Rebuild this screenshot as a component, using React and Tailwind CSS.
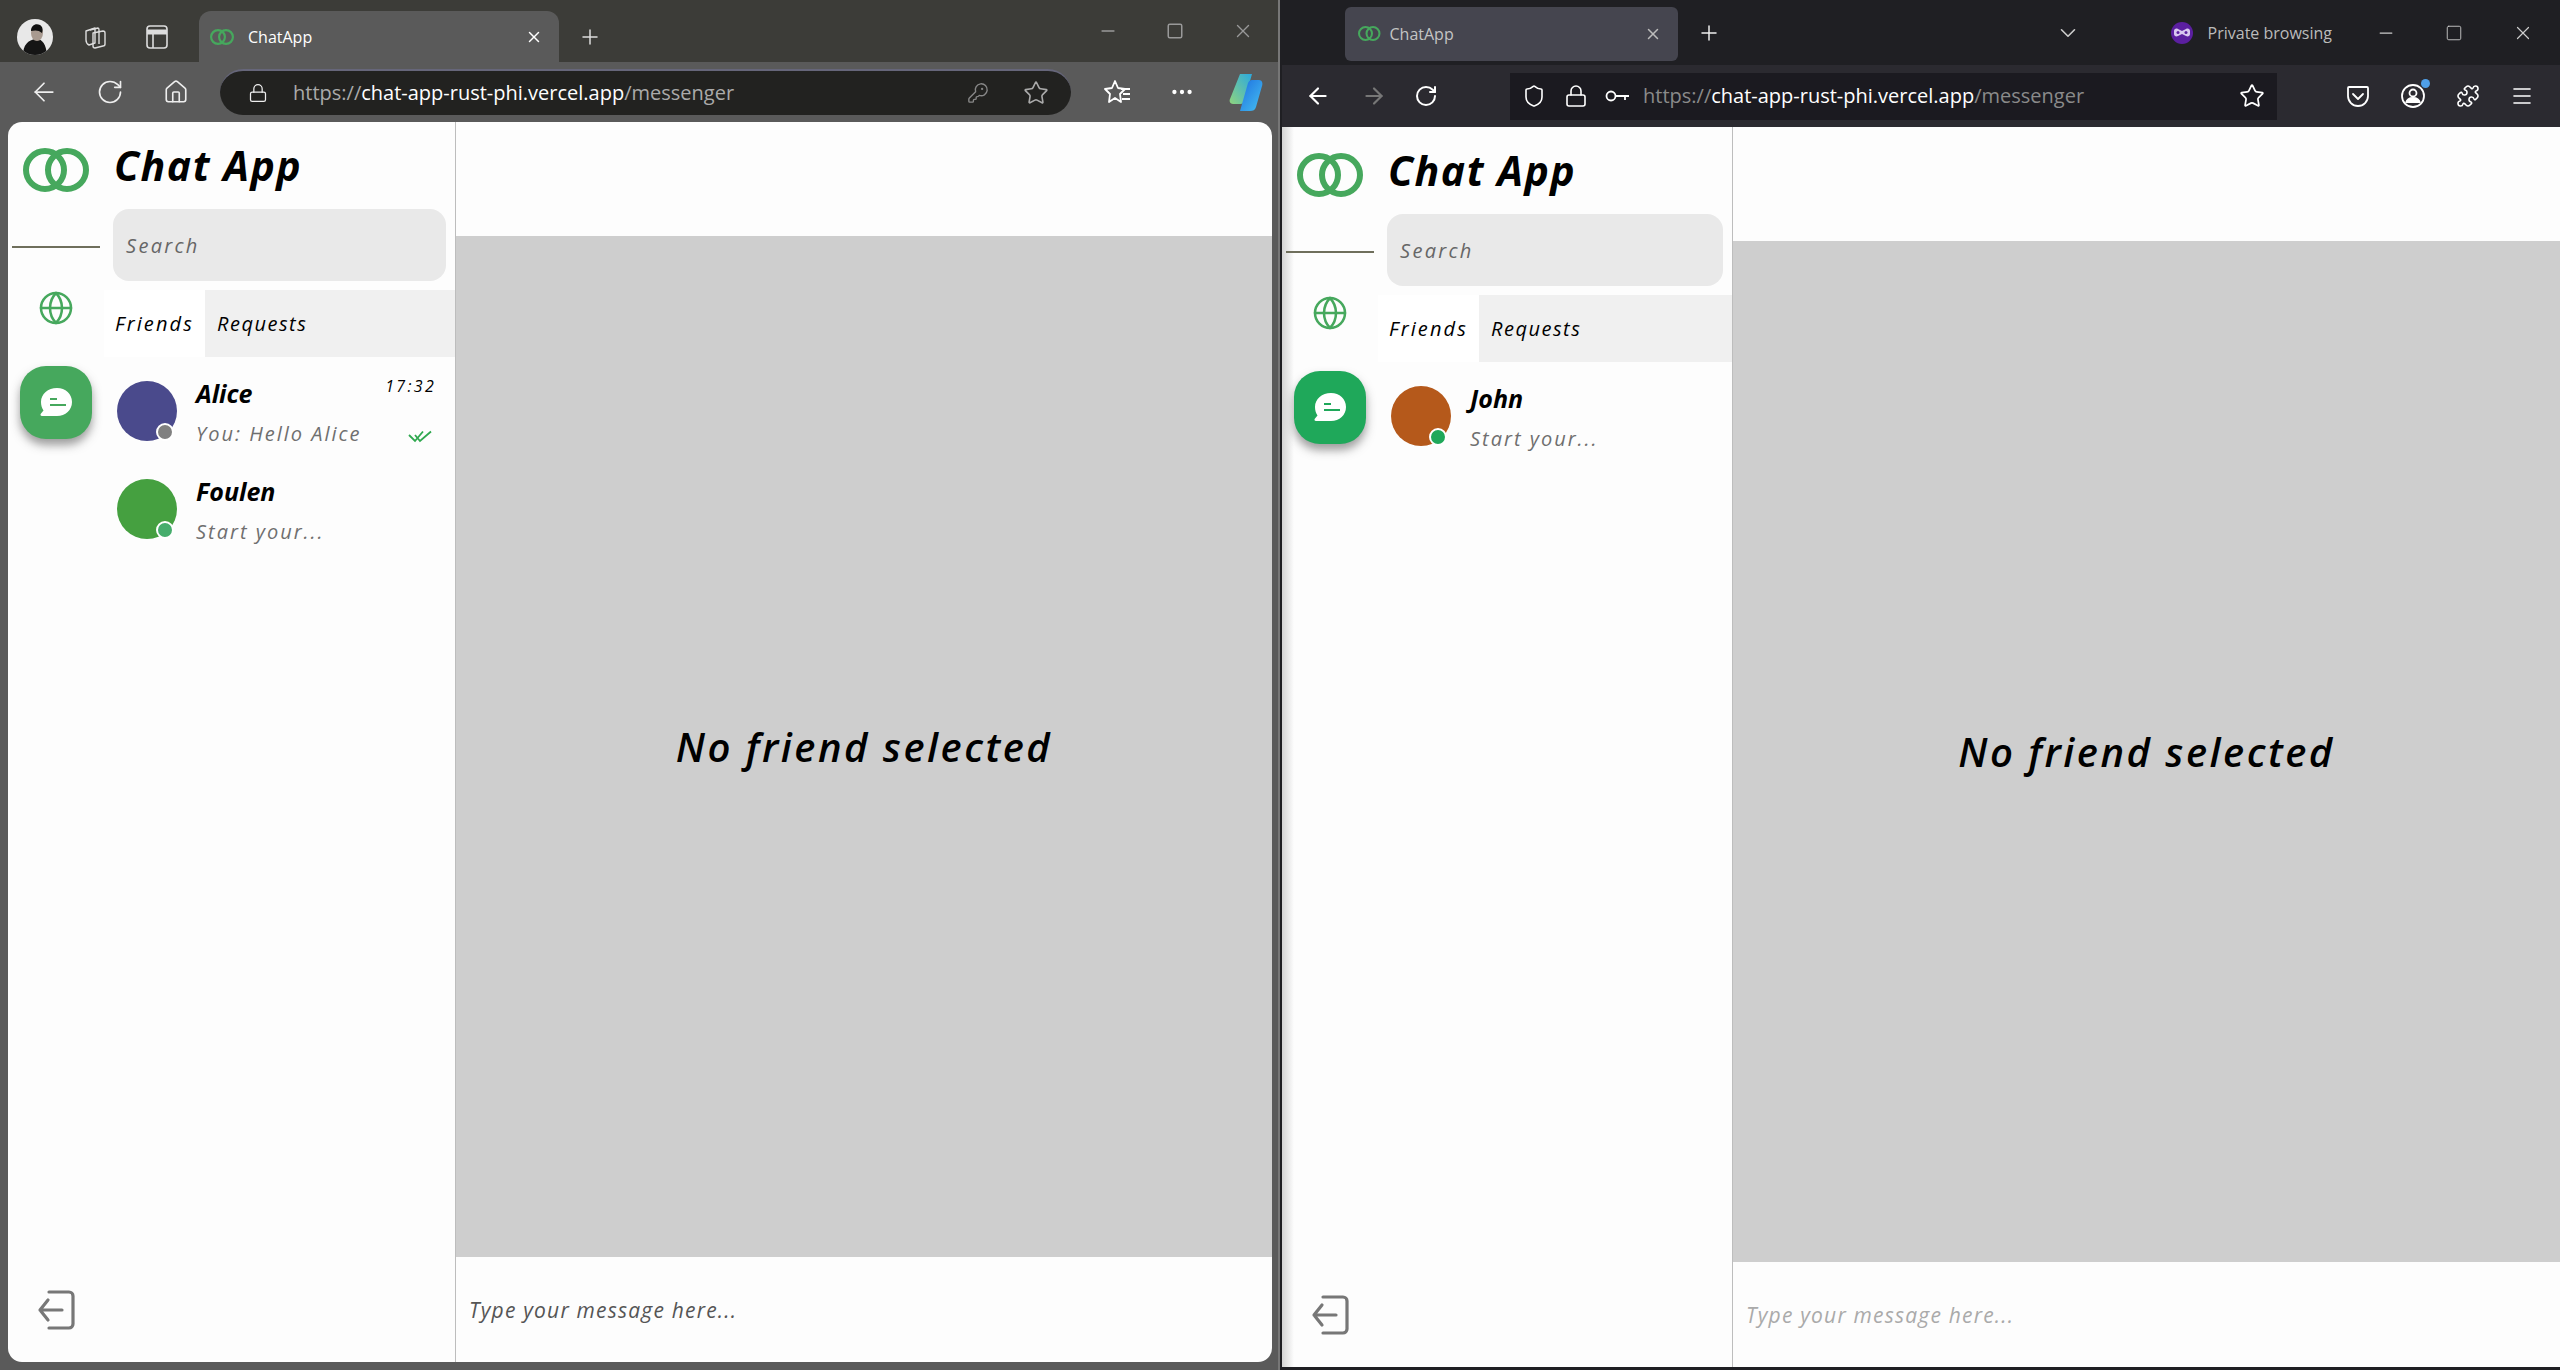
import React from "react";
import { ArrowLeft, ArrowRight, RotateCw, Home, Lock, KeyRound, Star, Plus, X, Minus, Square, Globe, Shield, Ellipsis, Puzzle, Menu, ChevronDown } from "lucide-react";

const hand = "font-['Open_Sans',sans-serif] italic";

function Rings({ size = 20 }) {
  return (
    <svg width={size * 1.5} height={size} viewBox="0 0 66 44" fill="none" stroke="#46a85d" strokeWidth="6">
      <circle cx="22" cy="22" r="19" />
      <circle cx="44" cy="22" r="19" />
    </svg>
  );
}

function Bubble({ color }) {
  return (
    <svg width="34" height="34" viewBox="0 0 34 34">
      <path d="M18 2c8.500 0 15 6 15 14s-6.500 14-15 14H3c-1.500 0-2-1.500-1-2.500l2.500-3C2.800 22 2 19 2 16 2 8 9 2 18 2z" fill="#fff" />
      <rect x="11" y="12" width="7" height="2" fill={color} />
      <rect x="11" y="18" width="16" height="2" fill={color} />
    </svg>
  );
}

function Logout() {
  return (
    <svg width="38" height="40" viewBox="0 0 38 40" fill="none" stroke="#777" strokeWidth="3.200" strokeLinecap="round" strokeLinejoin="round">
      <path d="M12 2h20a4 4 0 0 1 4 4v28a4 4 0 0 1-4 4H12" />
      <path d="M25 20H3M11 10L3 20l8 10" />
    </svg>
  );
}

function DoubleCheck() {
  return (
    <svg width="24" height="13" viewBox="0 0 24 13" fill="none" stroke="#2fa84f" strokeWidth="1.800">
      <path d="M1 5l6 6 8-9.500M7 5l5 6L23 1.500" />
    </svg>
  );
}

function Row({ color, dot, dotRight, name, sub, time, check }) {
  return (
    <div className="h-[98px] flex items-center pl-[13px] pr-[19px]">
      <div className="relative w-[60px] h-[60px] rounded-full shrink-0" style={{ backgroundColor: color }}>
        <div className={`absolute bottom-0 w-[18px] h-[18px] rounded-full border-2 border-white ${dotRight}`} style={{ backgroundColor: dot }} />
      </div>
      <div className="ml-[19px] flex-1 min-w-0 mt-[4px]">
        <div className="flex items-start justify-between h-[42px]">
          <span className={`${hand} font-bold text-[25px] leading-[36px] text-black`}>{name}</span>
          {time && <span className={`${hand} text-[16px] leading-[22px] tracking-[2.300px] text-black`}>{time}</span>}
        </div>
        <div className="flex items-center justify-between h-[34px]">
          <span className={`${hand} text-[20px] tracking-[2px] leading-[30px] text-[#6f6f6f]`}>{sub}</span>
          {check && <div className="mr-[4px] mt-[4px]"><DoubleCheck /></div>}
        </div>
      </div>
    </div>
  );
}

function Messenger({ rows, railClass, widthClass, btn, placeholderColor, topBg }) {
  return (
    <div className={`flex-1 flex min-h-0 ${topBg}`}>
      <div className={`flex shrink-0 border-r border-[#bdbdbd] ${widthClass}`}>
        <div className={`${railClass} shrink-0 flex flex-col items-center pt-[26px] pb-[32px]`}>
          <Rings size={44} />
          <div className="w-[88px] h-[2px] bg-[#6f6f5c] mt-[54px] shrink-0" />
          <Globe size={36} color="#46a85d" strokeWidth={1.700} className="mt-[42px]" />
          <div className="mt-[40px] w-[72px] h-[73px] rounded-[26px] flex items-center justify-center shadow-[0_6px_10px_rgba(60,60,60,0.5)]" style={{ backgroundColor: btn }}>
            <Bubble color={btn} />
          </div>
          <div className="flex-1" />
          <Logout />
        </div>
        <div className="flex-1 min-w-0">
          <div className={`${hand} font-bold h-[87px] pl-[10px] pt-[15px] text-[41px] leading-[56px] tracking-[1.500px] text-black`}>Chat App</div>
          <div className="mx-[9px] h-[72px] rounded-[16px] bg-[#e9e9e9] flex items-center px-[13px] pt-[2px]">
            <span className={`${hand} text-[20px] tracking-[2.300px] text-[#666]`}>Search</span>
          </div>
          <div className="mt-[9px] h-[67px] bg-[#f0f0f0] flex">
            <div className={`${hand} w-[101px] bg-white flex items-center justify-center text-[20px] tracking-[2.100px] text-black`}>Friends</div>
            <div className={`${hand} pl-[12px] flex items-center text-[20px] tracking-[1.500px] text-black`}>Requests</div>
          </div>
          <div className="mt-[5px]">
            {rows.map((r) => <Row key={r.name} {...r} />)}
          </div>
        </div>
      </div>
      <div className="flex-1 min-w-0 flex flex-col">
        <div className="h-[114px] shrink-0" />
        <div className="flex-1 bg-[#cecece] flex items-center justify-center">
          <span className={`${hand} font-semibold text-[40px] tracking-[2.500px] text-black`}>No friend selected</span>
        </div>
        <div className="h-[105px] shrink-0 flex items-center pl-[13px] pt-[2px]">
          <span className={`${hand} text-[21px] tracking-[1.200px] ${placeholderColor}`}>Type your message here...</span>
        </div>
      </div>
    </div>
  );
}

function Avatar() {
  return (
    <svg width="36" height="36" viewBox="0 0 36 36">
      <defs><clipPath id="av"><circle cx="18" cy="18" r="18" /></clipPath></defs>
      <g clipPath="url(#av)">
        <rect width="36" height="36" fill="#e8e8e8" />
        <path d="M6 36c0-10 5-15 13-16 7 0 10 6 11 16z" fill="#151515" />
        <ellipse cx="20" cy="14" rx="6" ry="8" fill="#a89a90" />
        <path d="M14 12c0-6 5-8 9-6 3 2 3 5 2 8-3-3-7-3-11-2z" fill="#111" />
      </g>
    </svg>
  );
}

function Collections() {
  return (
    <svg width="26" height="26" viewBox="0 0 26 26" fill="none" stroke="#ddd" strokeWidth="1.400" strokeLinejoin="round">
      <path d="M4 7l9-3v15l-6 2c-2-1-3-3-3-5z" />
      <path d="M8 6l8-2c1 0 1 1 1 2v14" />
      <path d="M11 9l10-2c1 0 2 1 2 2v11c0 1 0 2-2 2l-8 2c-1 0-2-1-2-2z" />
    </svg>
  );
}

function VerticalTabs() {
  return (
    <svg width="24" height="26" viewBox="0 0 24 26" fill="none" stroke="#ddd" strokeWidth="1.600">
      <rect x="2" y="2" width="20" height="22" rx="3" />
      <path d="M2 8h20" strokeWidth="5" />
      <path d="M8 9v15" />
    </svg>
  );
}

function FavList() {
  return (
    <svg width="28" height="26" viewBox="0 0 28 26" fill="none" stroke="#fff" strokeWidth="1.800" strokeLinejoin="round">
      <path d="M11 2l3 7 7 1-5 5 1 8-6-4-6 4 1-8-5-5 7-1z" />
      <path d="M17 10h9M19 15h7M18 20h8" />
    </svg>
  );
}

function Copilot() {
  return (
    <svg width="36" height="40" viewBox="0 0 36 40">
      <defs>
        <linearGradient id="cp1" x1="0" y1="1" x2="1" y2="0"><stop offset="0" stopColor="#8fd47e" /><stop offset="1" stopColor="#2aa9e0" /></linearGradient>
        <linearGradient id="cp2" x1="0" y1="0" x2="1" y2="1"><stop offset="0" stopColor="#1d6fe0" /><stop offset="1" stopColor="#46c0f0" /></linearGradient>
      </defs>
      <path d="M12 2h12l-8 28c-1 2-3 2-5 2H5c-3 0-4-3-3-5z" fill="url(#cp1)" />
      <path d="M24 8h7c3 0 4 3 3 6l-6 21c-1 3-3 4-6 4H12l8-28c1-2 2-3 4-3z" fill="url(#cp2)" />
    </svg>
  );
}

function EdgeWindow() {
  return (
    <div className="w-[1280px] shrink-0 h-[1370px] flex flex-col bg-[#5a5a5a] border-r-[2px] border-[#777] pl-[8px] pr-[6px] pb-[8px]">
      <div className="-ml-[8px] -mr-[6px] h-[62px] bg-[#3c3c38] flex items-end shrink-0 relative">
        <div className="w-[199px] h-[51px] flex items-center">
          <div className="ml-[17px]"><Avatar /></div>
          <div className="ml-[29px]"><Collections /></div>
          <div className="ml-[37px]"><VerticalTabs /></div>
        </div>
        <div className="w-[360px] h-[51px] bg-[#5a5a5a] rounded-t-[12px] flex items-center pl-[11px] pr-[16px]">
          <Rings size={16} />
          <span className="ml-[14px] font-['Open_Sans',sans-serif] text-[16px] text-white flex-1">ChatApp</span>
          <X size={18} color="#fff" />
        </div>
        <Plus size={24} color="#ddd" strokeWidth={1.500} className="ml-[19px] mb-[13px]" />
        <div className="flex-1" />
        <div className="flex items-center gap-[48px] pr-[24px] mb-[20px]">
          <Minus size={20} color="#999" />
          <Square size={18} color="#999" />
          <X size={22} color="#999" strokeWidth={1.500} />
        </div>
      </div>
      <div className="-ml-[8px] -mr-[6px] h-[60px] flex items-center shrink-0">
        <ArrowLeft size={30} color="#eee" strokeWidth={1.400} className="ml-[29px]" />
        <RotateCw size={28} color="#eee" strokeWidth={1.400} className="ml-[37px]" />
        <Home size={26} color="#eee" strokeWidth={1.500} className="ml-[39px]" />
        <div className="ml-[31px] w-[851px] h-[46px] rounded-[23px] bg-[#222220] border-t-2 border-[#66667a] flex items-center pl-[28px] pr-[22px]">
          <Lock size={20} color="#eee" strokeWidth={1.500} />
          <span className="ml-[25px] font-['Open_Sans',sans-serif] text-[20px] text-[#aaa] flex-1">https://<span className="text-white">chat-app-rust-phi.vercel.app</span>/messenger</span>
          <KeyRound size={22} color="#888" strokeWidth={1.500} />
          <Star size={26} color="#aaa" strokeWidth={1.500} className="ml-[34px]" />
        </div>
        <div className="ml-[33px]"><FavList /></div>
        <Ellipsis size={26} color="#fff" className="ml-[37px]" />
        <div className="ml-[33px]"><Copilot /></div>
      </div>
      <div className="flex-1 min-h-0 flex rounded-[14px] overflow-hidden">
        <Messenger
          railClass="w-[96px]"
          widthClass="w-[448px]"
          btn="#46a85d"
          placeholderColor="text-[#555]"
          topBg="bg-[#fdfdfd]"
          rows={[
            { color: "#4a4a8c", dot: "#808080", dotRight: "right-[3px]", name: "Alice", sub: "You: Hello Alice", time: "17:32", check: true },
            { color: "#45a040", dot: "#46ad6c", dotRight: "right-[3px]", name: "Foulen", sub: "Start your..." },
          ]}
        />
      </div>
    </div>
  );
}

function Pocket() {
  return (
    <svg width="24" height="24" viewBox="0 0 24 24" fill="none" stroke="#fff" strokeWidth="1.800" strokeLinecap="round" strokeLinejoin="round">
      <path d="M3 3h18a1 1 0 0 1 1 1v8a10 10 0 0 1-20 0V4a1 1 0 0 1 1-1z" />
      <path d="M7 10l5 5 5-5" />
    </svg>
  );
}

function Profile() {
  return (
    <div className="relative">
      <svg width="26" height="26" viewBox="0 0 26 26" fill="none" stroke="#fff" strokeWidth="1.800">
        <circle cx="13" cy="13" r="11" />
        <circle cx="13" cy="10" r="3.500" />
        <path d="M6 20c1-4 4-5 7-5s6 1 7 5" fill="#fff" />
      </svg>
      <div className="absolute -top-[4px] -right-[4px] w-[9px] h-[9px] rounded-full bg-[#4f9fe8]" />
    </div>
  );
}

function PrivateIcon() {
  return (
    <svg width="22" height="22" viewBox="0 0 22 22">
      <circle cx="11" cy="11" r="11" fill="#5b1fa0" />
      <path d="M3 9c0-2 2-3 4-2l4 2 4-2c2-1 4 0 4 2v3c0 2-2 3-4 2l-4-2-4 2c-2 1-4 0-4-2z" fill="#d9c8f0" />
      <circle cx="7" cy="10.500" r="1.500" fill="#5b1fa0" />
      <circle cx="15" cy="10.500" r="1.500" fill="#5b1fa0" />
    </svg>
  );
}

function FirefoxWindow() {
  return (
    <div className="flex-1 min-w-0 h-[1370px] flex flex-col bg-[#1f1f23] pl-[2px] pb-[3px]">
      <div className="h-[65px] shrink-0 flex items-center relative bg-[#1f1f23]">
        <div className="ml-[63px] w-[333px] h-[54px] rounded-[6px] bg-[#45454f] flex items-center pl-[13px] pr-[16px] mt-[2px]">
          <Rings size={15} />
          <span className="ml-[9px] font-['Open_Sans',sans-serif] text-[16px] text-[#c4c4c4] flex-1">ChatApp</span>
          <X size={18} color="#bbb" />
        </div>
        <Plus size={24} color="#eee" strokeWidth={1.500} className="ml-[19px]" />
        <div className="flex-1" />
        <ChevronDown size={26} color="#ccc" strokeWidth={1.500} />
        <div className="ml-[90px]"><PrivateIcon /></div>
        <span className="ml-[15px] font-['Open_Sans',sans-serif] text-[16px] text-[#bbb]">Private browsing</span>
        <div className="ml-[44px] flex items-center gap-[49px] pr-[26px]">
          <Minus size={20} color="#ccc" strokeWidth={1.500} />
          <Square size={18} color="#ccc" strokeWidth={1.200} />
          <X size={22} color="#ccc" strokeWidth={1.300} />
        </div>
      </div>
      <div className="h-[62px] shrink-0 bg-[#2b2a30] flex items-center">
        <ArrowLeft size={26} color="#fff" strokeWidth={2} className="ml-[23px]" />
        <ArrowRight size={26} color="#777" strokeWidth={2} className="ml-[30px]" />
        <RotateCw size={24} color="#fff" strokeWidth={2} className="ml-[27px]" />
        <div className="ml-[72px] w-[767px] h-[47px] bg-[#1b1a20] flex items-center pl-[12px] pr-[12px]">
          <Shield size={24} color="#fff" strokeWidth={1.600} />
          <Lock size={24} color="#fff" strokeWidth={1.600} className="ml-[18px]" />
          <svg width="26" height="14" viewBox="0 0 26 14" fill="none" stroke="#fff" strokeWidth="1.800" className="ml-[17px]"><circle cx="6" cy="7" r="4.500" /><path d="M11 7h13M20 7v4" /></svg>
          <span className="ml-[12px] font-['Open_Sans',sans-serif] text-[20px] text-[#8a8a8a] flex-1">https://<span className="text-white">chat-app-rust-phi.vercel.app</span>/messenger</span>
          <Star size={26} color="#fff" strokeWidth={1.600} />
        </div>
        <div className="flex-1" />
        <div className="flex items-center gap-[30px] pr-[26px]">
          <Pocket />
          <Profile />
          <Puzzle size={24} color="#fff" strokeWidth={1.600} />
          <Menu size={24} color="#fff" strokeWidth={1.600} />
        </div>
      </div>
      <div className="flex-1 min-h-0 flex bg-gradient-to-r from-[#d4d4d4] to-[#fdfdfd] to-[12px]">
        <Messenger
          railClass="w-[96px]"
          widthClass="w-[451px]"
          btn="#1fa85a"
          placeholderColor="text-[#aaa]"
          topBg=""
          rows={[{ color: "#b5591b", dot: "#1fa85a", dotRight: "right-[4px]", name: "John", sub: "Start your..." }]}
        />
      </div>
    </div>
  );
}

export default function App() {
  return (
    <div className="w-[2560px] h-[1370px] flex overflow-hidden bg-[#3c3c38]">
      <EdgeWindow />
      <FirefoxWindow />
    </div>
  );
}
